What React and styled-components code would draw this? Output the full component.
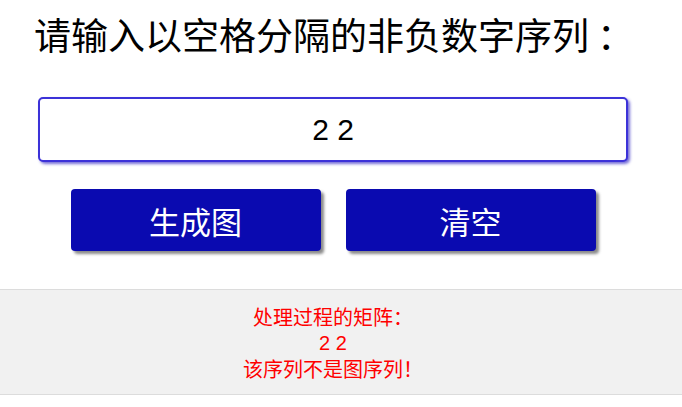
import React, { useState } from 'react';
import styled, { createGlobalStyle } from 'styled-components';

const GlobalStyle = createGlobalStyle`
    body{
        margin: 0;
        background: #ffffff;
        font-family: "Noto Sans CJK SC", "Liberation Sans", sans-serif;
    }
`

function App() {
    const [text, setText] = useState('2 2');

    return (
        <>
            <GlobalStyle />
            <Title>请输入以空格分隔的非负数字序列<span className='colon'>：</span></Title>
            <Form onSubmit={(e) => e.preventDefault()}>
                <SeqInput value={text} onChange={(e) => setText(e.target.value)} />
                <ButtonRow>
                    <ActionButton type='submit'>生成图</ActionButton>
                    <ActionButton type='button' onClick={() => setText('')}>清空</ActionButton>
                </ButtonRow>
            </Form>
            <Result>
                <ResultInner>
                    <p>处理过程的矩阵：</p>
                    <p className='num'>2 2</p>
                    <p>该序列不是图序列！</p>
                </ResultInner>
            </Result>
        </>
    );
}

export default App;

const Title = styled.h1`
    margin: 10px 0 0;
    padding-left: 34px;
    font-size: 37px;
    line-height: 48px;
    font-weight: normal;
    color: #000000;
    .colon{
        margin-left: 8px;
    }
`

const Form = styled.form`
    width: 590px;
    margin: 39px 0 0 38px;
    display: flex;
    flex-direction: column;
    align-items: center;
`

const SeqInput = styled.input`
    box-sizing: border-box;
    width: 590px;
    height: 65px;
    border: 2px solid #3c32d8;
    border-radius: 5px;
    box-shadow: 2px 2px 3px rgba(60, 50, 200, 0.7);
    text-align: center;
    font-family: "Liberation Sans", sans-serif;
    font-size: 30px;
    color: #000000;
    outline: none;
`

const ButtonRow = styled.div`
    display: flex;
    gap: 25px;
    margin-top: 27px;
`

const ActionButton = styled.button`
    width: 250px;
    height: 62px;
    border: none;
    border-radius: 4px;
    background: #0a0ab0;
    color: #ffffff;
    font-family: "Noto Sans CJK SC", sans-serif;
    font-size: 31px;
    box-shadow: 3px 3px 3px #8a8a8a;
    cursor: pointer;
`

const Result = styled.div`
    margin-top: 38px;
    background: #f1f1f1;
    border-top: 1px solid #dcdcdc;
    border-bottom: 1px solid #dcdcdc;
    padding: 14px 0 12px;
`

const ResultInner = styled.div`
    width: 590px;
    margin-left: 38px;
    text-align: center;
    color: #ff0000;
    font-size: 20px;
    line-height: 26px;
    p{
        margin: 0;
    }
    .num{
        font-family: "Liberation Sans", sans-serif;
    }
`
